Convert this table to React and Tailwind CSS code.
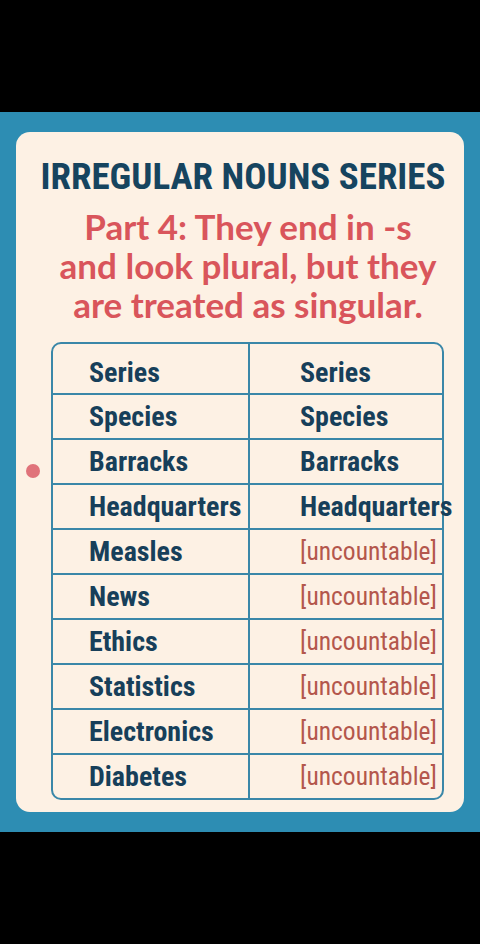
import React from 'react';

const rows = [
  ['Series', 'Series'],
  ['Species', 'Species'],
  ['Barracks', 'Barracks'],
  ['Headquarters', 'Headquarters'],
  ['Measles', null],
  ['News', null],
  ['Ethics', null],
  ['Statistics', null],
  ['Electronics', null],
  ['Diabetes', null],
];

const App = () => {
  return (
    <div className="w-[480px] h-[944px] bg-black font-['Roboto',sans-serif]">
      <div className="h-[112px] bg-black" />
      <div className="relative h-[720px] bg-[#2d8db3] pt-[20px] pl-[16px]">
        <span className="absolute left-[26px] top-[352px] w-[14px] h-[14px] rounded-full bg-[#e0737a]" />
        <div className="w-[448px] h-[680px] rounded-[14px] bg-[#fdf1e4] pt-[23px] flex flex-col">
          <h1 className="pl-[6px] text-center text-[37px] leading-[44px] font-bold text-[#16445f] whitespace-nowrap [font-stretch:75%]">
            IRREGULAR NOUNS SERIES
          </h1>
          <p className="mt-[8px] pl-[16px] text-center font-['Lato',sans-serif] text-[35px] leading-[39px] font-bold text-[#d9555b]">
            Part 4: They end in -s
            <br />
            and look plural, but they
            <br />
            are treated as singular.
          </p>
          <div className="mt-[18px] ml-[35px] w-[393px] rounded-[10px] border-2 border-[#3a87a8] text-[28px] [font-stretch:75%]">
            {rows.map(([left, right], i) => (
              <div
                key={left}
                className={`flex ${i === 0 ? 'h-[49px]' : 'h-[45px] border-t-2 border-[#3a87a8]'}`}
              >
                <div className={`w-[197px] shrink-0 border-r-2 border-[#3a87a8] pl-[36px] flex items-center font-bold text-[#173f5a] whitespace-nowrap ${i === 0 ? 'pt-[8px]' : ''}`}>
                  {left}
                </div>
                <div className={`flex-1 pl-[50px] flex items-center whitespace-nowrap ${i === 0 ? 'pt-[8px]' : ''}`}>
                  {right ? (
                    <span className="font-bold text-[#173f5a]">{right}</span>
                  ) : (
                    <span className="text-[25.5px] text-[#b4574c]">[uncountable]</span>
                  )}
                </div>
              </div>
            ))}
          </div>
        </div>
      </div>
      <div className="h-[112px] bg-black" />
    </div>
  );
};

export default App;
